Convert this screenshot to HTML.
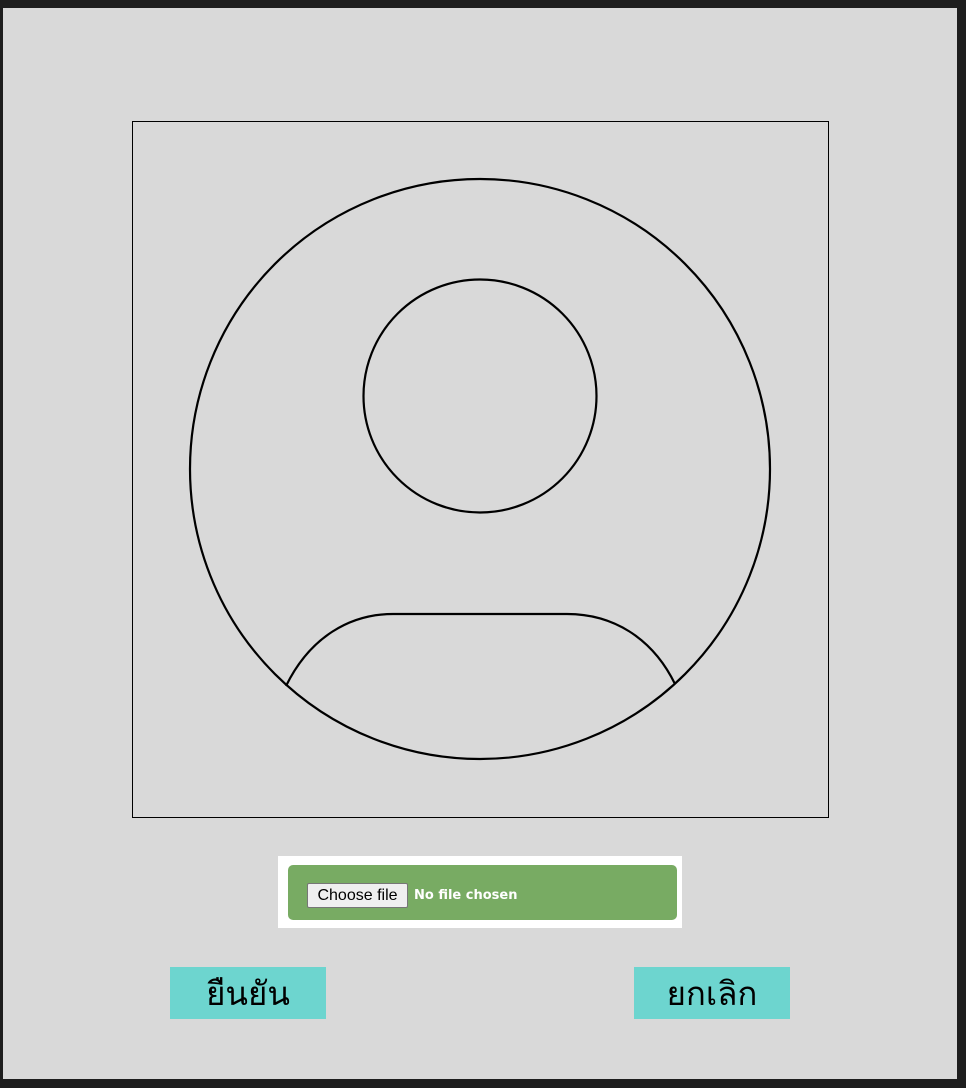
<!DOCTYPE html>
<html><head><meta charset="utf-8"><style>
html,body{margin:0;padding:0;}
body{width:966px;height:1088px;background:#1e1e1e;position:relative;overflow:hidden;font-family:"Liberation Sans",sans-serif;}
.panel{position:absolute;left:3px;top:8px;width:954px;height:1071px;background:#d9d9d9;}
.white{position:absolute;left:278px;top:856px;width:404px;height:72px;background:#fff;}
.green{position:absolute;left:288px;top:865px;width:389px;height:55px;background:#78ab63;border-radius:5px;}
.cf{position:absolute;left:307px;top:883px;width:101px;height:25px;background:#efefef;border:1px solid #767676;border-radius:2px;box-sizing:border-box;font-size:16px;color:#000;text-align:center;line-height:23px;}
.nf{position:absolute;left:414px;top:886px;font-family:"DejaVu Sans",sans-serif;font-size:13px;font-weight:bold;color:#fff;line-height:20px;}
.btn{position:absolute;top:967px;width:156px;height:52px;background:#6dd5cf;font-family:"Liberation Sans","Noto Sans CJK SC",sans-serif;font-size:33px;text-align:center;line-height:54px;color:#000;}
</style></head><body>
<div class="panel"></div>
<svg style="position:absolute;left:0;top:0" width="966" height="1088">
<rect x="132.5" y="121.5" width="696" height="696" fill="none" stroke="#000" stroke-width="1"/>
<circle cx="480" cy="469" r="290" fill="none" stroke="#000" stroke-width="2.2"/>
<circle cx="480" cy="396" r="116.5" fill="none" stroke="#000" stroke-width="2.2"/>
<path d="M286 686 C 310 637, 350 614, 393 614 L567 614 C 612 614, 652 637, 675 684" fill="none" stroke="#000" stroke-width="2.2"/>
</svg>
<div class="white"></div>
<div class="green"></div>
<div class="cf">Choose file</div>
<div class="nf">No file chosen</div>
<div class="btn" style="left:170px">ยืนยัน</div>
<div class="btn" style="left:634px">ยกเลิก</div>
</body></html>
